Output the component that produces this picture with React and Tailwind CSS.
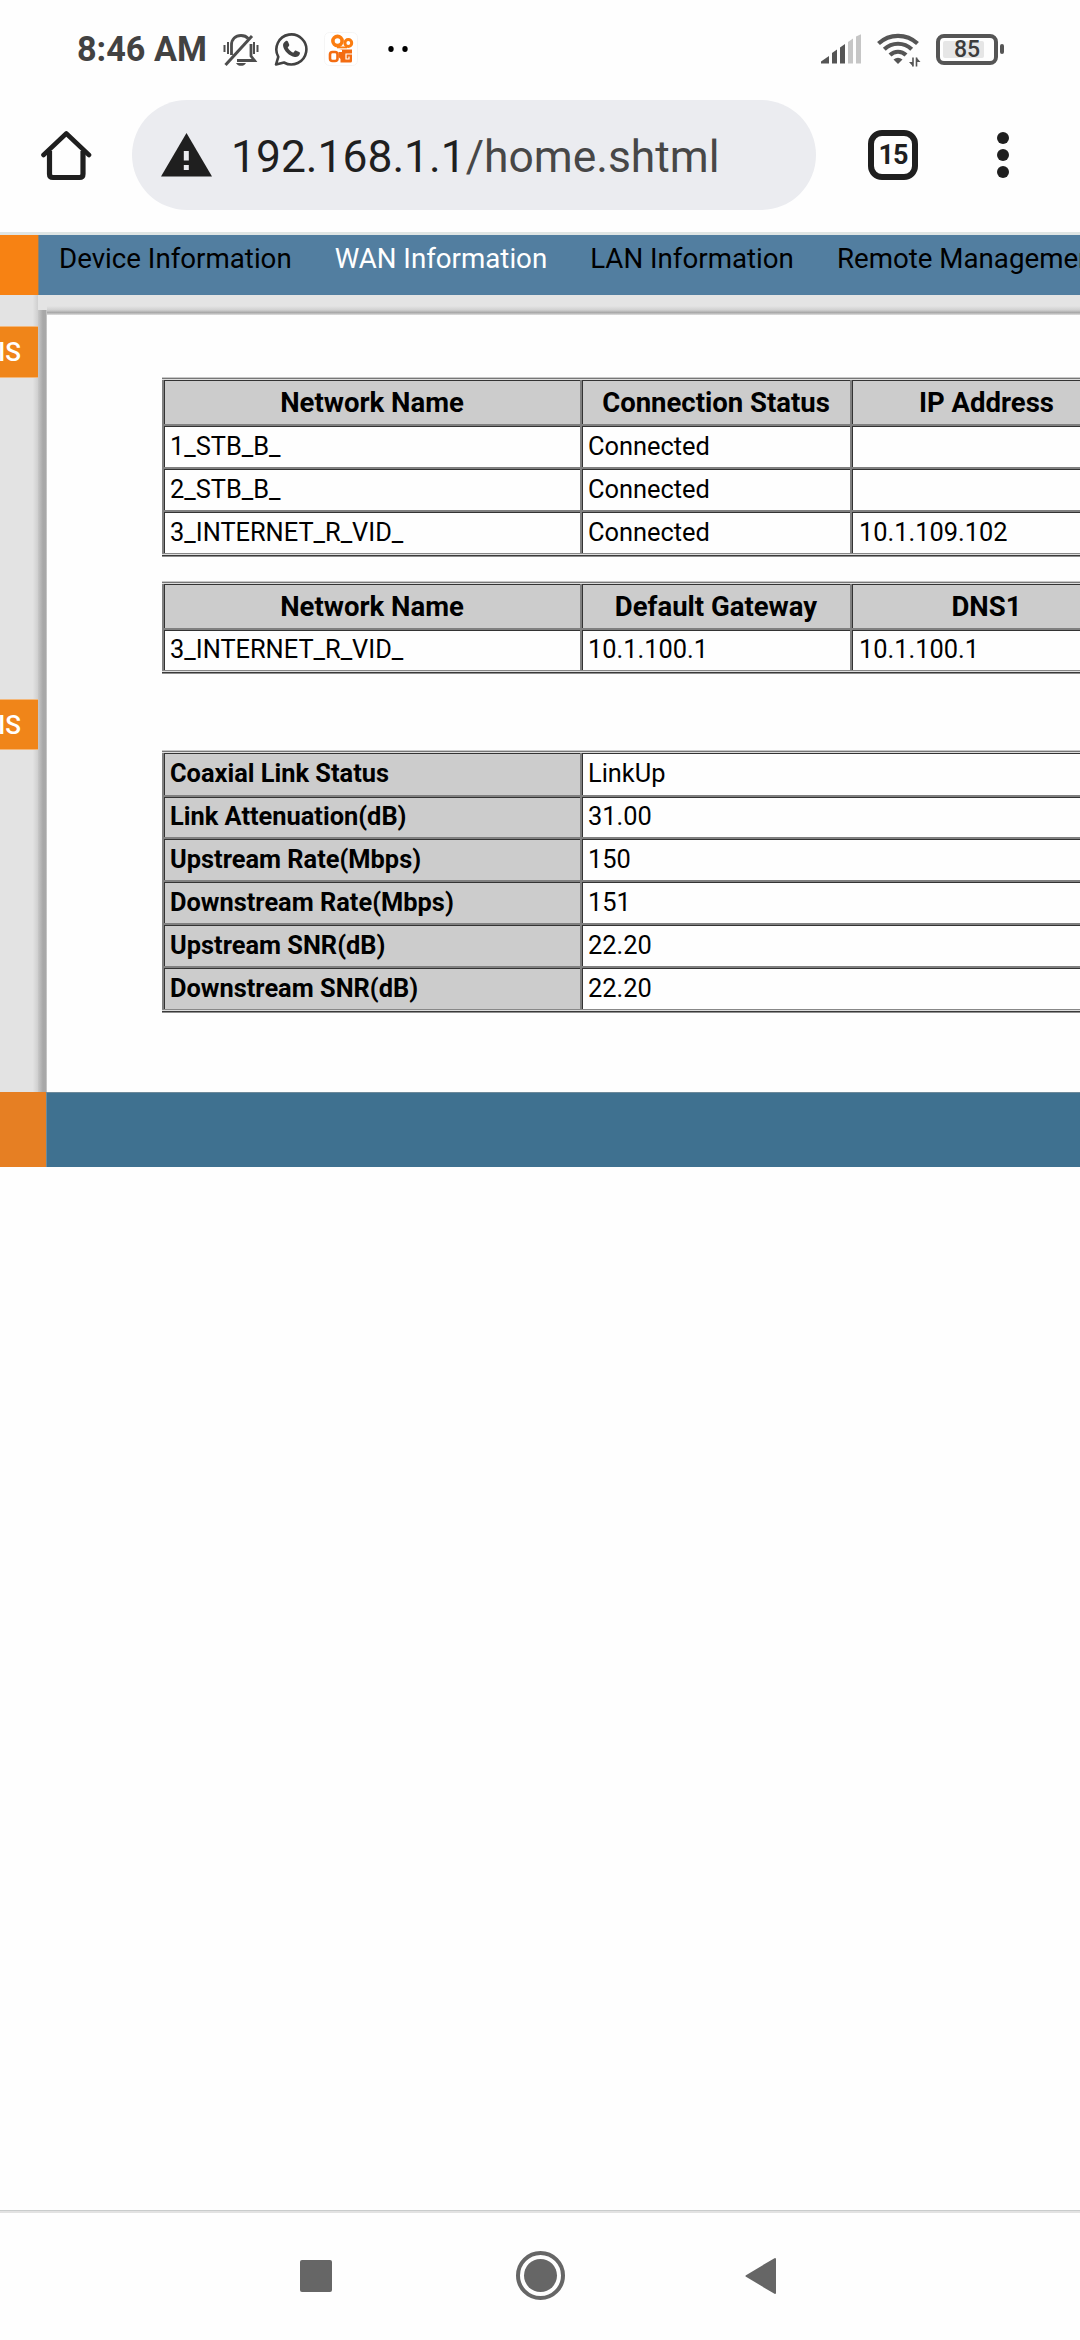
import React from "react";

function StatusBar() {
  return (
    <div className="flex h-[98px] items-center pl-[77px] text-[#424242]">
      <span className="w-[146px] whitespace-nowrap text-[34.200px] font-bold leading-[98px]">8:46 AM</span>
      <svg className="h-[35px] w-[36px]" viewBox="0 0 36 35" fill="none" stroke="#4d4d4d">
        <path d="M8.500 23V13c0-6 4-9.500 9.500-9.500 3 0 5.500 1 7.200 3" strokeWidth="2.800" />
        <path d="M28 12v12l3.500 4.500H14" strokeWidth="2.800" />
        <path d="M2.500 33 29 4" strokeWidth="3" />
        <path d="M1.500 13v7M5 10v12M31 10v12M34.500 13v7" strokeWidth="2" />
        <path d="M13 31h10c-1 2-3 2.800-5 2.800S14 33 13 31Z" fill="#4d4d4d" stroke="none" />
      </svg>
      <svg className="ml-[15px] h-[35px] w-[35px]" viewBox="0 0 35 35">
        <path d="M2 32.500 4.300 24.800A15 15 0 1 1 10 30.500Z" fill="none" stroke="#424242" strokeWidth="2.600" strokeLinejoin="round" />
        <path d="M11.500 9.200c.8-.7 2-.5 2.400.4l1.300 3c.2.6 0 1.200-.5 1.700l-1 1.200c1.300 2.400 3 4 5.500 5.200l1.500-1.700c.5-.5 1-.6 1.600-.3l2.800 1.400c.8.4 1 1.100.7 1.900-.8 2.200-2.700 3.200-5 2.900-5.600-1-10.700-5.700-11.700-11-.300-1.900.6-3.500 2.400-4.700Z" fill="#424242" />
      </svg>
      <svg className="ml-[15px] h-[34px] w-[34px]" viewBox="0 0 34 34">
        <rect x=".5" y=".5" width="33" height="33" rx="5" fill="#fff" stroke="#f5f5f5" />
        <g fill="none" stroke="#fb7d10" strokeWidth="3.600">
          <circle cx="13.500" cy="9" r="4.600" />
          <circle cx="24.300" cy="11" r="3.400" strokeWidth="3" />
        </g>
        <path d="M13 14.500h10v1.800H13Z" fill="#fb7d10" />
        <rect x="6" y="20" width="7.500" height="9" rx="2.500" fill="none" stroke="#f36c12" strokeWidth="2.600" />
        <path d="M15 17.500h13v11.500q0 1.500-1.500 1.500h-10V27L14.500 25V20H18v-2Z" fill="#f36c12" />
        <path d="M28 22h-6v5h3v-2.500" fill="none" stroke="#fff" strokeWidth="1.200" />
      </svg>
      <svg className="ml-[29px] h-[8px] w-[24px]" viewBox="0 0 24 8" fill="#000">
        <ellipse cx="4" cy="4" rx="2.700" ry="3" />
        <ellipse cx="18" cy="4" rx="2.700" ry="3" />
      </svg>
      <svg className="ml-[410px] h-[30px] w-[41px]" viewBox="0 0 41 30" fill="#555">
        <path d="M0 29.500V27.500L8 22v7.500Z" />
        <path d="M11 29.500V19l5-3.500v14Z" />
        <path d="M19 29.500V13.500l5-3.500v19.500Z" />
        <path d="M27 29.500V8l5-3.500v25Z" fill="#c6c6c6" />
        <path d="M35 29.500V2.500L40 .200v29.300Z" fill="#c6c6c6" />
      </svg>
      <svg className="ml-[15px] h-[35px] w-[44px]" viewBox="0 0 44 35" fill="none" stroke="#555" strokeWidth="4.200">
        <path d="M1.500 11.500a28.500 28.500 0 0 1 39 0" />
        <path d="M7.300 17.200a20 20 0 0 1 27.400 0" />
        <path d="M13 23a11.500 11.500 0 0 1 16 0" />
        <path d="M16.500 27.500Q21 24 25.500 27.500L21 32Z" fill="#555" stroke="none" />
        <path d="M36 25.500v9M39.500 25.500v9" strokeWidth="1.600" />
        <path d="M32 30h4v4.500ZM39.500 25.500v4.500h4Z" fill="#555" stroke="none" />
      </svg>
      <div className="ml-[15px] flex h-[31px] w-[62px] items-center rounded-[8px] border-4 border-[#555] px-[3px]">
        <div className="flex h-[17px] w-[41px] items-center justify-center rounded-[2px] bg-[#e6e6e6] pl-[7px] text-[23px] font-medium leading-none text-[#3c3c3c]">
          85
        </div>
      </div>
      <div className="ml-[2px] h-[10px] w-[4px] rounded-[2px] bg-[#555]" />
    </div>
  );
}

function Toolbar() {
  return (
    <div className="flex h-[134px] items-start pl-[41px]">
      <svg className="mt-[31px] h-[52px] w-[51px]" viewBox="0 0 51 52" fill="none" stroke="#1f1f1f">
        <path d="M2.500 26 25.300 4.500 48 26" strokeWidth="4.600" strokeLinecap="round" strokeLinejoin="round" />
        <path d="M8.500 22v23q0 3.500 3.500 3.500h26.500q3.500 0 3.500-3.500V22" strokeWidth="5.200" />
      </svg>
      <div className="ml-[40px] mt-[2px] flex h-[110px] w-[684px] items-center rounded-full bg-[#ebecf0] pl-[29px]">
        <svg className="h-[44px] w-[51px]" viewBox="0 0 51 44">
          <path d="M25.500 0 51 43.500H0Z" fill="#1f1f1f" />
          <path d="M22.800 18h5v9.500h-5ZM22.800 32h5v5h-5Z" fill="#ebecf0" />
        </svg>
        <span className="ml-[19px] mt-[5px] whitespace-nowrap text-[44.400px] leading-none text-[#1f1f1f]">
          192.168.1.1<span className="text-[#474747]">/home.shtml</span>
        </span>
      </div>
      <div className="ml-[52px] mt-[32px] flex h-[50px] w-[50px] items-center justify-center rounded-[14px] border-[6px] border-[#1f1f1f] text-[27px] font-bold leading-none tracking-[-1px] text-[#1f1f1f]">
        15
      </div>
      <div className="ml-[79px] mt-[34px] flex w-[12px] flex-col gap-[5px]">
        <i className="h-[12px] w-[12px] rounded-full bg-[#1f1f1f]" />
        <i className="h-[12px] w-[12px] rounded-full bg-[#1f1f1f]" />
        <i className="h-[12px] w-[12px] rounded-full bg-[#1f1f1f]" />
      </div>
    </div>
  );
}

const CELL = "flex items-center border-l-2 border-[#808080] shadow-[inset_1px_1px_0_#333]";
const HEAD = " justify-center bg-[#ccc] pt-[2px] text-[27.500px] font-bold";
const TABLE =
  "w-[959px] pb-[4px] pt-[3px] shadow-[inset_0_1px_0_#c8c8c8,inset_0_2px_0_#777,inset_0_3px_0_#ddd,inset_0_-1px_0_#909090,inset_0_-2px_0_#3a3a3a,inset_0_-3px_0_#ddd,inset_0_-4px_0_#888,inset_1px_0_0_#777]";

function Grid({ head, rows, headHeight, rowHeight }) {
  return (
    <div className={TABLE}>
      <div className={"grid grid-cols-[418px_270px_271px] " + headHeight}>
        {head.map((h) => (
          <div key={h} className={CELL + HEAD}>{h}</div>
        ))}
      </div>
      {rows.map((row) => (
        <div key={row[0]} className={"grid grid-cols-[418px_270px_271px] " + rowHeight}>
          {row.map((v, i) => (
            <div key={i} className={CELL + " border-t-2 " + (i === 2 ? "pl-[7px]" : "pl-[6px]")}>{v}</div>
          ))}
        </div>
      ))}
    </div>
  );
}

const LINK = [
  ["Coaxial Link Status", "LinkUp"],
  ["Link Attenuation(dB)", "31.00"],
  ["Upstream Rate(Mbps)", "150"],
  ["Downstream Rate(Mbps)", "151"],
  ["Upstream SNR(dB)", "22.20"],
  ["Downstream SNR(dB)", "22.20"],
];

function SideButton({ className }) {
  return (
    <div className={"flex w-[38px] items-center justify-end overflow-hidden border-y border-[#f3b77a] bg-[#f08519] pr-[17px] text-[26px] font-medium leading-none text-white " + className}>
      IS
    </div>
  );
}

export default function App() {
  return (
    <div className="flex h-[2340px] w-[1080px] flex-col overflow-hidden bg-[#fefefe] font-['Roboto',sans-serif] text-black">
      <StatusBar />
      <Toolbar />
      <div className="h-[3px] shrink-0 bg-[#dfe5e4]" />
      <div className="flex h-[60px] shrink-0">
        <div className="w-[38px] shrink-0 bg-[#f78213]" />
        <nav className="flex w-[1042px] items-center gap-[43px] overflow-hidden whitespace-nowrap border-l border-[#8f826b] bg-[#527ea0] pb-[12px] pl-[20px] text-[27.700px]">
          <span>Device Information</span>
          <span className="text-white">WAN Information</span>
          <span>LAN Information</span>
          <span>Remote Management</span>
        </nav>
      </div>
      <div className="flex h-[797px] shrink-0 bg-[#e4e4e4]">
        <aside className="flex w-[47px] shrink-0">
          <div className="w-[38px] bg-[linear-gradient(90deg,#e3e3e3_86%,#cfcfcf)]">
            <SideButton className="mt-[31px] h-[52px]" />
            <SideButton className="mt-[321px] h-[51px]" />
          </div>
          <div className="mt-[15px] w-[9px] bg-[linear-gradient(90deg,#c8c8c8,#a8a8a8_55%,#a8a8a8_85%,#d4d4d4)]" />
        </aside>
        <div className="w-[1033px] overflow-hidden">
          <div className="h-[20px] bg-[linear-gradient(180deg,#e4e4e4_55%,#d0d0d0_75%,#a8a8a8_88%,#e0e0e0)]" />
          <div className="flex h-[777px] flex-col bg-[#fefefe] pl-[115px] pt-[62px] text-[25.400px] leading-none">
            <Grid
              headHeight="h-[44px]"
              rowHeight="h-[43px]"
              head={["Network Name", "Connection Status", "IP Address"]}
              rows={[
                ["1_STB_B_", "Connected", ""],
                ["2_STB_B_", "Connected", ""],
                ["3_INTERNET_R_VID_", "Connected", "10.1.109.102"],
              ]}
            />
            <div className="h-[24px]" />
            <Grid
              headHeight="h-[44px]"
              rowHeight="h-[42px]"
              head={["Network Name", "Default Gateway", "DNS1"]}
              rows={[["3_INTERNET_R_VID_", "10.1.100.1", "10.1.100.1"]]}
            />
            <div className="h-[76px]" />
            <div className={TABLE}>
              {LINK.map(([k, v], i) => (
                <div key={k} className={"grid grid-cols-[418px_541px] " + (i > 1 ? "h-[43px]" : "h-[42px]")}>
                  <div className={CELL + " bg-[#ccc] pl-[6px] font-bold " + (i ? "border-t-2" : "")}>{k}</div>
                  <div className={CELL + " pl-[6px] " + (i ? "border-t-2" : "")}>{v}</div>
                </div>
              ))}
            </div>
          </div>
        </div>
      </div>
      <div className="flex h-[75px] shrink-0">
        <div className="w-[46px] bg-[#e67f23]" />
        <div className="flex-1 border-l border-t border-[#6d8a9b] bg-[#3f7190]" />
      </div>
      <div className="flex-1" />
      <div className="flex h-[130px] shrink-0 items-center border-t border-[#c9cccc] pl-[300px] shadow-[inset_0_2px_0_#e2e2e2]">
        <div className="h-[32px] w-[32px] rounded-[2px] bg-[#666]" />
        <div className="ml-[184px] flex h-[49px] w-[49px] items-center justify-center rounded-full border-4 border-[#666]">
          <div className="h-[33px] w-[33px] rounded-full bg-[#666]" />
        </div>
        <svg className="ml-[180px] h-[38px] w-[32px]" viewBox="0 0 32 38">
          <path d="M1.500 19 30 2v34Z" fill="#666" stroke="#666" strokeWidth="2" strokeLinejoin="round" />
        </svg>
      </div>
    </div>
  );
}
